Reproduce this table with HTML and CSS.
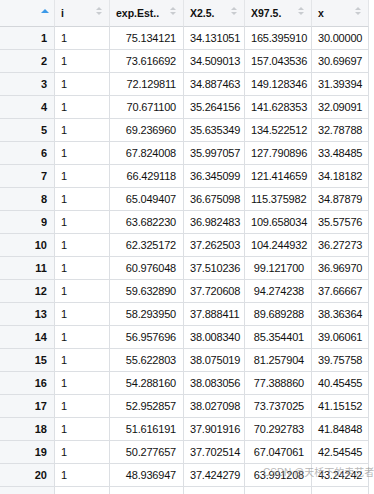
FILE: index.html
```html
<!DOCTYPE html>
<html>
<head>
<meta charset="utf-8">
<link rel="stylesheet" href="styles.css">
</head>
<body>
<div class="wrap">
<table class="grid">
<colgroup>
<col class="c0"><col class="c1"><col class="c2"><col class="c3"><col class="c4"><col class="c5">
</colgroup>
<thead>
<tr>
<th class="idx"><span class="sort-asc"></span></th>
<th>i<span class="sort"></span></th>
<th>exp.Est..<span class="sort"></span></th>
<th>X2.5.<span class="sort"></span></th>
<th>X97.5.<span class="sort"></span></th>
<th>x<span class="sort"></span></th>
</tr>
</thead>
<tbody>
<tr><td class="idx">1</td><td>1</td><td class="num">75.134121</td><td class="num">34.131051</td><td class="num">165.395910</td><td class="num">30.00000</td></tr>
<tr><td class="idx">2</td><td>1</td><td class="num">73.616692</td><td class="num">34.509013</td><td class="num">157.043536</td><td class="num">30.69697</td></tr>
<tr><td class="idx">3</td><td>1</td><td class="num">72.129811</td><td class="num">34.887463</td><td class="num">149.128346</td><td class="num">31.39394</td></tr>
<tr><td class="idx">4</td><td>1</td><td class="num">70.671100</td><td class="num">35.264156</td><td class="num">141.628353</td><td class="num">32.09091</td></tr>
<tr><td class="idx">5</td><td>1</td><td class="num">69.236960</td><td class="num">35.635349</td><td class="num">134.522512</td><td class="num">32.78788</td></tr>
<tr><td class="idx">6</td><td>1</td><td class="num">67.824008</td><td class="num">35.997057</td><td class="num">127.790896</td><td class="num">33.48485</td></tr>
<tr><td class="idx">7</td><td>1</td><td class="num">66.429118</td><td class="num">36.345099</td><td class="num">121.414659</td><td class="num">34.18182</td></tr>
<tr><td class="idx">8</td><td>1</td><td class="num">65.049407</td><td class="num">36.675098</td><td class="num">115.375982</td><td class="num">34.87879</td></tr>
<tr><td class="idx">9</td><td>1</td><td class="num">63.682230</td><td class="num">36.982483</td><td class="num">109.658034</td><td class="num">35.57576</td></tr>
<tr><td class="idx">10</td><td>1</td><td class="num">62.325172</td><td class="num">37.262503</td><td class="num">104.244932</td><td class="num">36.27273</td></tr>
<tr><td class="idx">11</td><td>1</td><td class="num">60.976048</td><td class="num">37.510236</td><td class="num">99.121700</td><td class="num">36.96970</td></tr>
<tr><td class="idx">12</td><td>1</td><td class="num">59.632890</td><td class="num">37.720608</td><td class="num">94.274238</td><td class="num">37.66667</td></tr>
<tr><td class="idx">13</td><td>1</td><td class="num">58.293950</td><td class="num">37.888411</td><td class="num">89.689288</td><td class="num">38.36364</td></tr>
<tr><td class="idx">14</td><td>1</td><td class="num">56.957696</td><td class="num">38.008340</td><td class="num">85.354401</td><td class="num">39.06061</td></tr>
<tr><td class="idx">15</td><td>1</td><td class="num">55.622803</td><td class="num">38.075019</td><td class="num">81.257904</td><td class="num">39.75758</td></tr>
<tr><td class="idx">16</td><td>1</td><td class="num">54.288160</td><td class="num">38.083056</td><td class="num">77.388860</td><td class="num">40.45455</td></tr>
<tr><td class="idx">17</td><td>1</td><td class="num">52.952857</td><td class="num">38.027098</td><td class="num">73.737025</td><td class="num">41.15152</td></tr>
<tr><td class="idx">18</td><td>1</td><td class="num">51.616191</td><td class="num">37.901916</td><td class="num">70.292783</td><td class="num">41.84848</td></tr>
<tr><td class="idx">19</td><td>1</td><td class="num">50.277657</td><td class="num">37.702514</td><td class="num">67.047061</td><td class="num">42.54545</td></tr>
<tr><td class="idx">20</td><td>1</td><td class="num">48.936947</td><td class="num">37.424279</td><td class="num">63.991208</td><td class="num">43.24242</td></tr>
<tr class="extra"><td class="idx"></td><td></td><td></td><td></td><td></td><td></td></tr>
</tbody>
</table>
<div class="watermark">CSDN @天桥下的卖艺者</div>
</div>
</body>
</html>
```

FILE: styles.css
```css
html, body {
  margin: 0;
  padding: 0;
  background: #ffffff;
  height: 494px;
  overflow: hidden;
}

.wrap {
  position: relative;
  width: 374px;
  height: 494px;
  overflow: hidden;
}

.grid {
  border-collapse: separate;
  border-spacing: 0;
  table-layout: fixed;
  width: 369px;
  font-family: "Liberation Sans", Arial, sans-serif;
  font-size: 11px;
  color: #111;
}

.c0 { width: 55px; }
.c1 { width: 55px; }
.c2 { width: 74px; }
.c3 { width: 61px; }
.c4 { width: 67px; }
.c5 { width: 57px; }

.grid th,
.grid td {
  box-sizing: border-box;
  border-right: 1px solid #dcdfe3;
  border-bottom: 1px solid #dcdfe3;
  padding: 0 6px;
  white-space: nowrap;
  overflow: hidden;
}

.grid th {
  position: relative;
  height: 27px;
  background: #f5f6f8;
  text-align: left;
  font-weight: bold;
  font-size: 10.5px;
  border-bottom: 1px solid #d3d6da;
  border-right: 1px solid #e3e5e8;
}

.grid td {
  height: 23px;
  letter-spacing: -0.2px;
}

.grid td.num {
  text-align: right;
  padding-right: 7px;
}

.grid .idx {
  background: #f5f7f9;
  text-align: right;
  font-weight: bold;
  padding-right: 7px;
}

.grid td.idx {
  letter-spacing: 0;
}

.sort {
  position: absolute;
  right: 7px;
  top: 7px;
  width: 6px;
  height: 10px;
}

.sort::before,
.sort::after {
  content: "";
  position: absolute;
  left: 0;
  border-left: 3px solid transparent;
  border-right: 3px solid transparent;
}

.sort::before {
  top: 0;
  border-bottom: 3px solid #c9ccd0;
}

.sort::after {
  top: 5px;
  border-top: 3px solid #c9ccd0;
}

.sort-asc {
  position: absolute;
  right: 5px;
  top: 9px;
  width: 0;
  height: 0;
  border-left: 4px solid transparent;
  border-right: 4px solid transparent;
  border-bottom: 4px solid #3d9ae8;
}

.extra td {
  height: 10px;
  border-bottom: none;
}

.watermark {
  position: absolute;
  left: 263px;
  top: 464px;
  font-family: "Liberation Sans", "Noto Sans CJK SC", sans-serif;
  font-size: 10px;
  color: rgba(150, 150, 150, 0.7);
  white-space: nowrap;
  pointer-events: none;
}
```
